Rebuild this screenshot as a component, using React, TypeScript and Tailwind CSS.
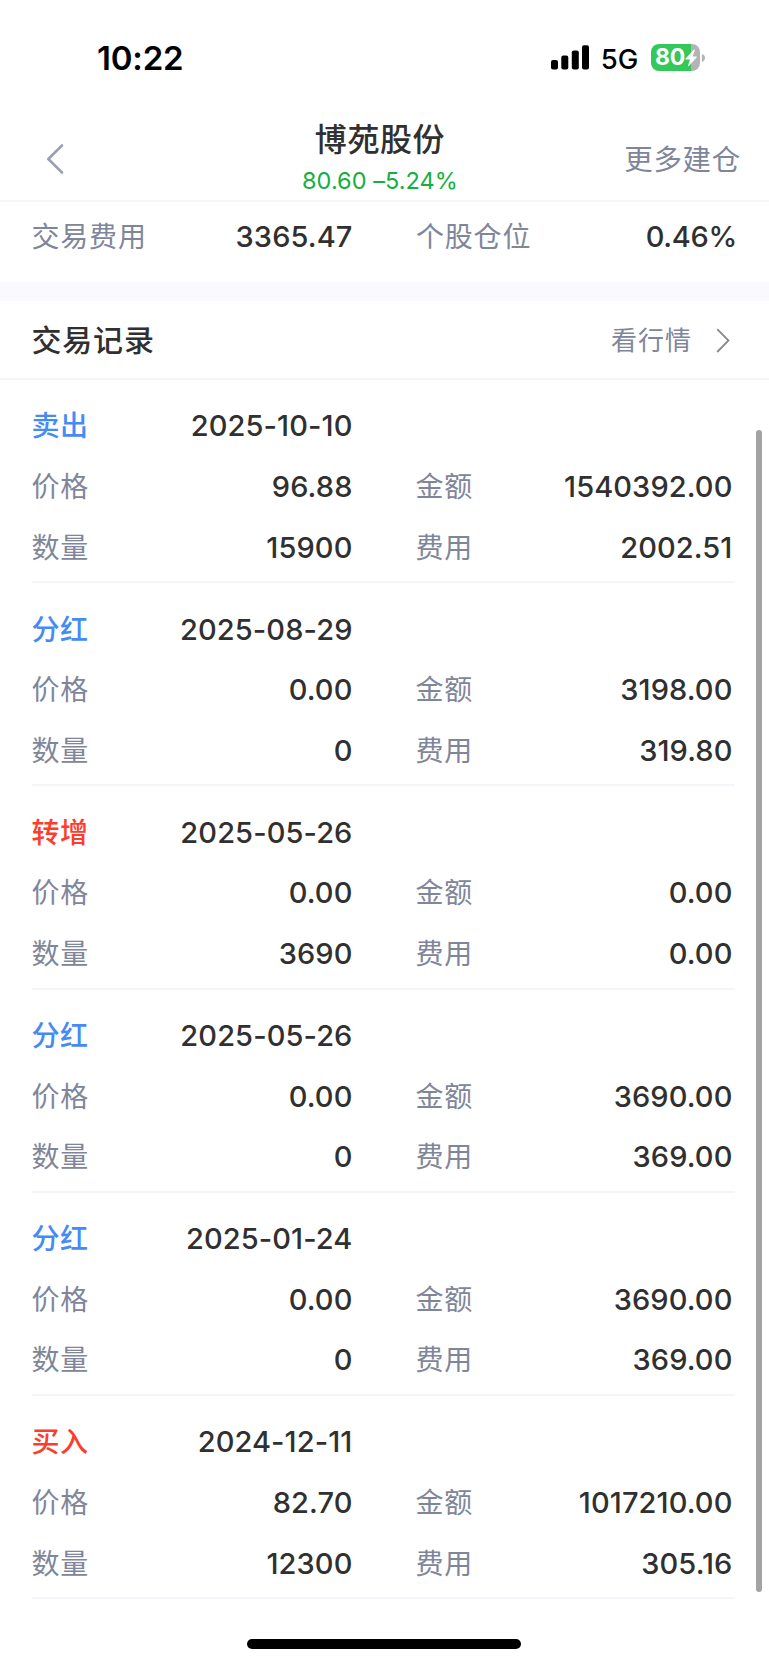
import React from "react";

type Trade = {
  kind: string;
  tone: "blue" | "red";
  date: string;
  price: string;
  amount: string;
  count: string;
  fee: string;
};

const trades: Trade[] = [
  { kind: "卖出", tone: "blue", date: "2025-10-10", price: "96.88", amount: "1540392.00", count: "15900", fee: "2002.51" },
  { kind: "分红", tone: "blue", date: "2025-08-29", price: "0.00", amount: "3198.00", count: "0", fee: "319.80" },
  { kind: "转增", tone: "red", date: "2025-05-26", price: "0.00", amount: "0.00", count: "3690", fee: "0.00" },
  { kind: "分红", tone: "blue", date: "2025-05-26", price: "0.00", amount: "3690.00", count: "0", fee: "369.00" },
  { kind: "分红", tone: "blue", date: "2025-01-24", price: "0.00", amount: "3690.00", count: "0", fee: "369.00" },
  { kind: "买入", tone: "red", date: "2024-12-11", price: "82.70", amount: "1017210.00", count: "12300", fee: "305.16" },
];

function Label({ children }: { children: React.ReactNode }) {
  return <span className="text-[28px] leading-[40px] tracking-[0.8px] text-[#80869a]">{children}</span>;
}

function Value({ children }: { children: React.ReactNode }) {
  return <span className="text-[29px] leading-[40px] font-medium tracking-[0.1px] text-[#303030]">{children}</span>;
}

function Row({ left, leftValue, right, rightValue }: { left: React.ReactNode; leftValue: string; right?: string; rightValue?: string }) {
  return (
    <div className="flex h-[60.6px] items-center">
      <div className="flex w-[321px] items-center justify-between">
        {left}
        <Value>{leftValue}</Value>
      </div>
      {right && (
        <div className="ml-[63px] flex w-[317px] items-center justify-between">
          <Label>{right}</Label>
          <Value>{rightValue}</Value>
        </div>
      )}
    </div>
  );
}

function TradeItem({ trade }: { trade: Trade }) {
  return (
    <section className="h-[203.2px] border-b-2 border-[#f4f4fb] pt-[16.2px]">
      <Row
        left={
          <span
            className={
              trade.tone === "blue"
                ? "text-[28px] leading-[40px] font-medium tracking-[0.6px] text-[#468bf4]"
                : "text-[28px] leading-[40px] font-medium tracking-[0.6px] text-[#fc3d2b]"
            }
          >
            {trade.kind}
          </span>
        }
        leftValue={trade.date}
      />
      <Row left={<Label>价格</Label>} leftValue={trade.price} right="金额" rightValue={trade.amount} />
      <Row left={<Label>数量</Label>} leftValue={trade.count} right="费用" rightValue={trade.fee} />
    </section>
  );
}

function StatusBar() {
  return (
    <div className="flex h-[116px] items-center justify-between pr-[64px] pl-[97px]">
      <span className="mb-px text-[33px] leading-[40px] font-semibold tracking-[-0.2px] text-black">10:22</span>
      <div className="mb-px flex items-center">
        <svg className="h-[25px] w-[38px]" viewBox="0 0 38 25" fill="#000">
          <rect x="0" y="15" width="7" height="9.5" rx="2" />
          <rect x="10.3" y="10.5" width="7" height="14" rx="2" />
          <rect x="20.8" y="5.5" width="7" height="19" rx="2" />
          <rect x="31" y="0.3" width="7" height="24.2" rx="2" />
        </svg>
        <span className="mt-[2px] ml-[12px] text-[27.5px] leading-[32px] font-medium tracking-[-0.2px] text-black">5G</span>
        <div className="ml-[13px] flex items-center">
          <div className="flex h-[27px] w-[49px] items-center overflow-hidden rounded-[8px] bg-[linear-gradient(to_right,#34c759_40px,#b3b3b3_40px)] pl-[4px]">
            <span className="text-[23px] leading-[27px] font-bold tracking-[-0.2px] text-white">80</span>
            <svg className="h-[18px] w-[12px] shrink-0" viewBox="0 0 12 18" fill="#fff">
              <path d="M8.8 0.8 0.6 9.6c-.4.5-.1 1 .4 1h4L3 16.6c-.2.7.4 1 .9.5l7.7-8.7c.4-.5.1-1-.4-1H7.5L9.8 1.4c.2-.7-.5-1.1-1-.6Z" />
            </svg>
          </div>
          <svg className="ml-[2px] h-[8px] w-[3px]" viewBox="0 0 3 8" fill="#b3b3b3">
            <path d="M0 0C2 .8 3 2.2 3 4S2 7.2 0 8Z" />
          </svg>
        </div>
      </div>
    </div>
  );
}

export default function App() {
  return (
    <main className="relative flex h-[1665px] w-[769px] flex-col overflow-hidden bg-white font-[Inter,'Noto_Sans_CJK_SC',sans-serif]">
      <StatusBar />
      <header className="grid h-[86px] shrink-0 grid-cols-[200px_1fr_200px] border-b-2 border-[#f5f5fa]">
        <div className="flex items-center pl-[46px]">
          <svg className="mt-[1px] h-[32px] w-[18px]" viewBox="0 0 18 32" fill="none" stroke="#9aa0b3" strokeWidth="2.6" strokeLinecap="round" strokeLinejoin="round">
            <path d="M16 2.5 2.3 16 16 29.5" />
          </svg>
        </div>
        <div className="flex flex-col items-center pr-[9px]">
          <h1 className="mt-[4px] text-[32px] leading-[40px] font-medium tracking-[0.6px] whitespace-nowrap text-[#303030]">博苑股份</h1>
          <p className="mt-[6px] text-[23.5px] leading-[30px] tracking-[0.05px] whitespace-nowrap text-[#13b041]">80.60 –5.24%</p>
        </div>
        <div className="flex items-center justify-end pt-[4px] pr-[28px]">
          <span className="text-[28.5px] leading-[40px] tracking-[0.7px] text-[#80869a]">更多建仓</span>
        </div>
      </header>
      <div className="flex h-[80px] shrink-0 items-start pt-[5px] pr-[32px] pl-[31.5px]">
        <div className="flex h-[60px] w-[321px] items-center justify-between">
          <Label>交易费用</Label>
          <Value>3365.47</Value>
        </div>
        <div className="ml-[63.5px] flex h-[60px] w-[321px] items-center justify-between">
          <Label>个股仓位</Label>
          <span className="text-[29px] leading-[40px] font-medium tracking-[-0.3px] text-[#303030]">0.46%</span>
        </div>
      </div>
      <div className="h-[19px] shrink-0 bg-[#f9f9fe]" />
      <div className="flex h-[79px] shrink-0 items-center justify-between border-b-2 border-[#f4f4fb] pr-[39px] pl-[31.5px]">
        <h2 className="mt-px text-[30px] leading-[40px] font-medium tracking-[0.8px] text-[#303030]">交易记录</h2>
        <div className="mt-[2px] flex items-center gap-[24px]">
          <span className="text-[26px] leading-[40px] tracking-[1px] text-[#80869a]">看行情</span>
          <svg className="h-[25px] w-[14px]" viewBox="0 0 14 25" fill="none" stroke="#8a8a8a" strokeWidth="1.8">
            <path d="M1.2 1.2 12.5 12.5 1.2 24" />
          </svg>
        </div>
      </div>
      <div className="flex flex-col pr-[34px] pl-[31.5px]">
        {trades.map((trade, i) => (
          <TradeItem key={i} trade={trade} />
        ))}
      </div>
      <div className="absolute top-[430px] left-[756px] h-[1162px] w-[6px] rounded-full bg-[#a3a3a3]" />
      <div className="absolute top-[1639px] left-[247px] h-[10px] w-[274px] rounded-full bg-black" />
    </main>
  );
}
